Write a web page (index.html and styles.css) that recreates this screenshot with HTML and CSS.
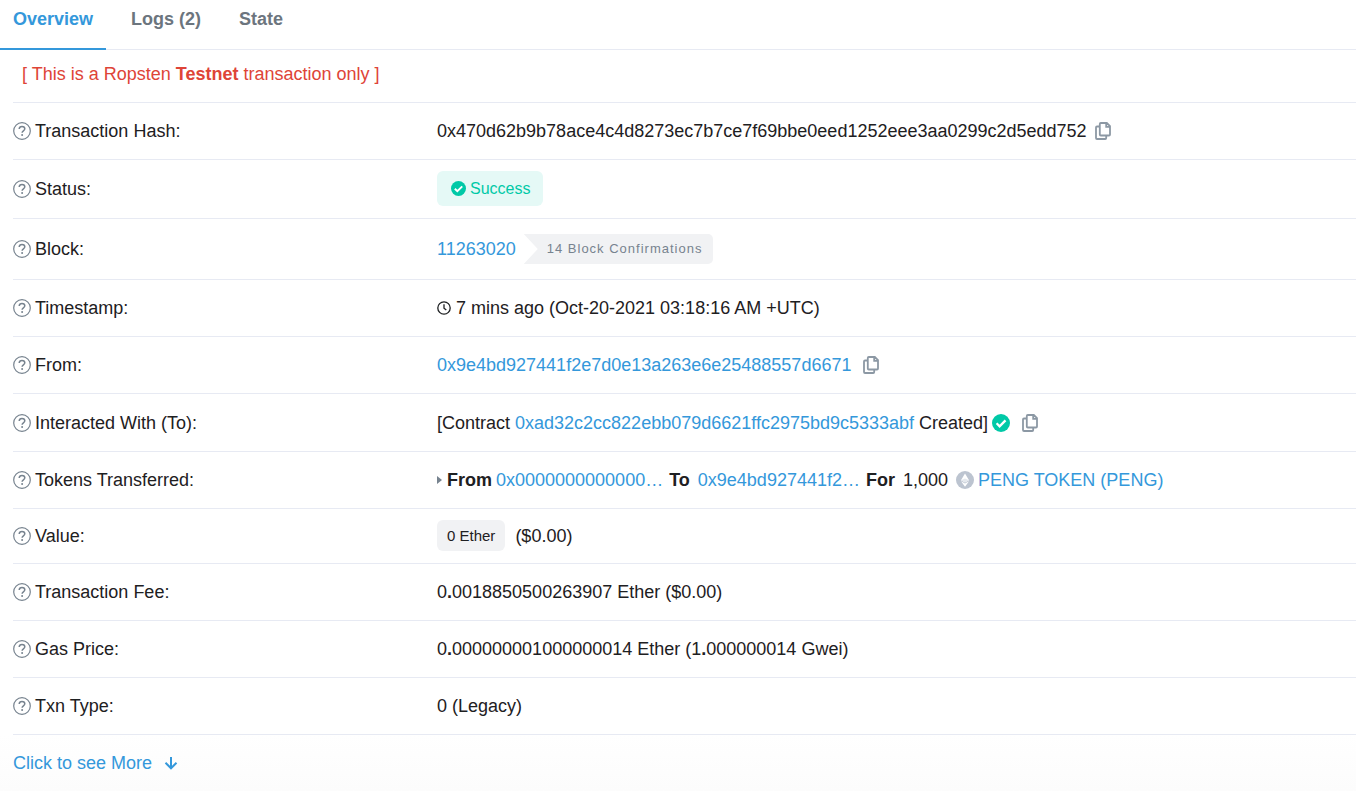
FILE: index.html
```
<!DOCTYPE html>
<html lang="en">
<head>
  <meta charset="UTF-8">
  <meta name="viewport" content="width=device-width, initial-scale=1">
  <title>Transaction Details</title>
  <link rel="stylesheet" href="styles.css">
</head>
<body>
  <!-- Icon symbols -->
  <svg class="sprite" aria-hidden="true">
    <symbol id="i-help" viewBox="0 0 18 18">
      <circle cx="9" cy="9" r="8.3" fill="none" stroke="currentColor" stroke-width="1.2"></circle>
      <path d="M6.2 7C6.300 5.400 7.400 4.500 9 4.500c1.700 0 2.800 1 2.800 2.300 0 2-2.700 2-2.700 3.900" fill="none" stroke="currentColor" stroke-width="1.500"></path>
      <circle cx="9.100" cy="12.900" r="1" fill="currentColor"></circle>
    </symbol>
    <symbol id="i-copy" viewBox="0 0 16 18">
      <path d="M5.800 1h6l3.200 3.200v8.300a1 1 0 0 1-1 1H5.800a1 1 0 0 1-1-1V2a1 1 0 0 1 1-1zM11.200 1v3.800H15M4.800 4.500H2a1 1 0 0 0-1 1V16a1 1 0 0 0 1 1h8.200a1 1 0 0 0 1-1v-2.500" fill="none" stroke="currentColor" stroke-width="1.800"></path>
    </symbol>
    <symbol id="i-check" viewBox="0 0 18 18">
      <circle cx="9" cy="9" r="9" fill="currentColor"></circle>
      <path d="M4.600 9.300l3 3 5.900-5.900" fill="none" stroke="#fff" stroke-width="2.300"></path>
    </symbol>
    <symbol id="i-clock" viewBox="0 0 14 14">
      <circle cx="7" cy="7" r="6.200" fill="none" stroke="currentColor" stroke-width="1.300"></circle>
      <path d="M7 3.200v4l2.300 1.800" fill="none" stroke="currentColor" stroke-width="1.300"></path>
    </symbol>
  </svg>

  <nav class="tabs">
    <a class="tab active" href="#overview">Overview</a>
    <a class="tab" href="#logs">Logs (2)</a>
    <a class="tab" href="#state">State</a>
  </nav>

  <main class="details" id="overview">
    <p class="notice">[ This is a Ropsten <b>Testnet</b> transaction only ]</p>

    <dl class="rows">
      <div class="row">
        <dt><svg class="help"><use href="#i-help"></use></svg>Transaction Hash:</dt>
        <dd>
          <span>0x470d62b9b78ace4c4d8273ec7b7ce7f69bbe0eed1252eee3aa0299c2d5edd752</span>
          <button class="copy" type="button" aria-label="Copy"><svg><use href="#i-copy"></use></svg></button>
        </dd>
      </div>
      <div class="row">
        <dt><svg class="help"><use href="#i-help"></use></svg>Status:</dt>
        <dd><span class="badge success"><svg><use href="#i-check"></use></svg>Success</span></dd>
      </div>
      <div class="row row-block">
        <dt><svg class="help"><use href="#i-help"></use></svg>Block:</dt>
        <dd><a href="#block">11263020</a><span class="confirmations">14 Block Confirmations</span></dd>
      </div>
      <div class="row">
        <dt><svg class="help"><use href="#i-help"></use></svg>Timestamp:</dt>
        <dd><svg class="clock"><use href="#i-clock"></use></svg>7 mins ago (Oct-20-2021 03:18:16 AM +UTC)</dd>
      </div>
      <div class="row">
        <dt><svg class="help"><use href="#i-help"></use></svg>From:</dt>
        <dd>
          <a href="#from">0x9e4bd927441f2e7d0e13a263e6e25488557d6671</a>
          <button class="copy copy-wide" type="button" aria-label="Copy"><svg><use href="#i-copy"></use></svg></button>
        </dd>
      </div>
      <div class="row row-contract">
        <dt><svg class="help"><use href="#i-help"></use></svg>Interacted With (To):</dt>
        <dd>
          <span>[Contract <a href="#to">0xad32c2cc822ebb079d6621ffc2975bd9c5333abf</a> Created]</span>
          <svg class="verified"><use href="#i-check"></use></svg>
          <button class="copy copy-wide" type="button" aria-label="Copy"><svg><use href="#i-copy"></use></svg></button>
        </dd>
      </div>
      <div class="row">
        <dt><svg class="help"><use href="#i-help"></use></svg>Tokens Transferred:</dt>
        <dd class="transfer">
          <span class="caret"></span>
          <b>From</b> <a class="hash" href="#zero">0x0000000000000…</a>
          <b>To</b> <a class="hash hash-to" href="#from">0x9e4bd927441f2…</a>
          <b>For</b> <span class="amount">1,000</span>
          <svg class="token" viewBox="0 0 18 18">
            <circle cx="9" cy="9" r="9" fill="#bcc4d0"></circle>
            <path d="M9 2.500l4 6.800-4 2.300-4-2.300z" fill="#fff"></path>
            <path d="M5 10.300l4 2.300 4-2.300-4 5.500z" fill="#fff"></path>
            <path d="M9 7.500l4 1.800-4 2.300-4-2.300z" fill="#e4e8ed"></path>
          </svg>
          <a href="#token">PENG TOKEN (PENG)</a>
        </dd>
      </div>
      <div class="row">
        <dt><svg class="help"><use href="#i-help"></use></svg>Value:</dt>
        <dd><span class="badge value">0 Ether</span>($0.00)</dd>
      </div>
      <div class="row">
        <dt><svg class="help"><use href="#i-help"></use></svg>Transaction Fee:</dt>
        <dd><span>0<b>.</b>0018850500263907 Ether ($0.00)</span></dd>
      </div>
      <div class="row">
        <dt><svg class="help"><use href="#i-help"></use></svg>Gas Price:</dt>
        <dd><span>0<b>.</b>000000001000000014 Ether (1<b>.</b>000000014 Gwei)</span></dd>
      </div>
      <div class="row">
        <dt><svg class="help"><use href="#i-help"></use></svg>Txn Type:</dt>
        <dd>0 (Legacy)</dd>
      </div>
    </dl>
  </main>

  <div class="more">
    <a href="#more">Click to see More
      <svg viewBox="0 0 14 14"><path d="M7 1v11M1.500 6.800L7 12.300l5.500-5.500" fill="none" stroke="currentColor" stroke-width="2"></path></svg>
    </a>
  </div>
</body>
</html>
```
FILE: styles.css
```
* {
  box-sizing: border-box;
}
body {
  margin: 0;
  font-family: "Liberation Sans", Arial, sans-serif;
  font-size: 18px;
  line-height: 26px;
  color: #1e2022;
  background: #fff;
}
a {
  color: #3498db;
  text-decoration: none;
}
dd a:hover,
.more a:hover {
  text-decoration: underline;
}
svg {
  flex: none;
}
.sprite {
  display: none;
}

/* Tabs */
.tabs {
  display: flex;
  gap: 12px;
  height: 50px;
  border-bottom: 1px solid #e7eaf3;
}
.tab {
  height: 50px;
  padding: 6px 13px 0;
  font-weight: bold;
  color: #6c757e;
}
.tab.active {
  color: #3498db;
  border-bottom: 2px solid #3498db;
}

/* Detail rows */
.details {
  padding-left: 13px;
}
.notice {
  margin: 0;
  padding: 11px 9px 15px;
  color: #de4437;
  border-bottom: 1px solid #e7eaf3;
}
.rows {
  margin: 0;
}
.row {
  display: flex;
  align-items: center;
  padding: 11px 0 12px;
  border-bottom: 1px solid #e7eaf3;
}
.row-block {
  padding: 15px 0;
}
.row-contract {
  padding: 12px 0;
}
dt {
  display: flex;
  align-items: center;
  gap: 4px;
  flex: 0 0 424px;
}
dd {
  display: flex;
  align-items: center;
  margin: 0;
  white-space: nowrap;
}
.row:not(.row-block) dd:not(:has(.badge)) {
  min-height: 33px;
}
.help {
  width: 18px;
  height: 18px;
  color: #77838f;
}

/* Badges */
.badge {
  display: inline-flex;
  align-items: center;
  border-radius: 6px;
}
.success {
  gap: 4px;
  height: 35px;
  padding: 0 13px 0 14px;
  font-size: 16px;
  color: #00c9a7;
  background: #e5f9f6;
}
.success svg {
  width: 15px;
  height: 15px;
}
.value {
  height: 31px;
  margin-right: 10px;
  padding: 0 10px;
  font-size: 15px;
  background: #f1f2f4;
}
.confirmations {
  height: 30px;
  margin-left: 8px;
  padding: 0 11px 0 23px;
  font-size: 13px;
  line-height: 30px;
  letter-spacing: 1px;
  color: #77838f;
  background: #f1f2f4;
  border-radius: 0 5px 5px 0;
  clip-path: polygon(0 0, 100% 0, 100% 100%, 0 100%, 14px 50%);
}

/* Icons */
.copy {
  display: flex;
  margin-left: 8px;
  padding: 0;
  color: #8c98a4;
  background: none;
  border: 0;
  cursor: pointer;
}
.copy-wide {
  margin-left: 12px;
}
.copy svg {
  width: 16px;
  height: 18px;
}
.clock {
  width: 14px;
  height: 14px;
  margin-right: 5px;
}
.verified {
  width: 18px;
  height: 18px;
  margin-left: 4px;
  color: #00c9a7;
}

/* Token transfer */
.transfer {
  gap: 4px;
}
.caret {
  margin-right: 1px;
  border: solid transparent;
  border-width: 4px 0 4px 5px;
  border-left-color: #77838f;
}
.hash {
  margin-right: 2px;
}
.hash-to,
.amount {
  margin-left: 4px;
}
.token {
  width: 18px;
  height: 18px;
  margin-left: 4px;
}

/* Footer link */
.more {
  padding: 15px 13px;
  background: linear-gradient(#fff, #fcfcfc);
}
.more a {
  display: inline-flex;
  align-items: center;
  gap: 12px;
}
.more svg {
  width: 14px;
  height: 14px;
}
```
